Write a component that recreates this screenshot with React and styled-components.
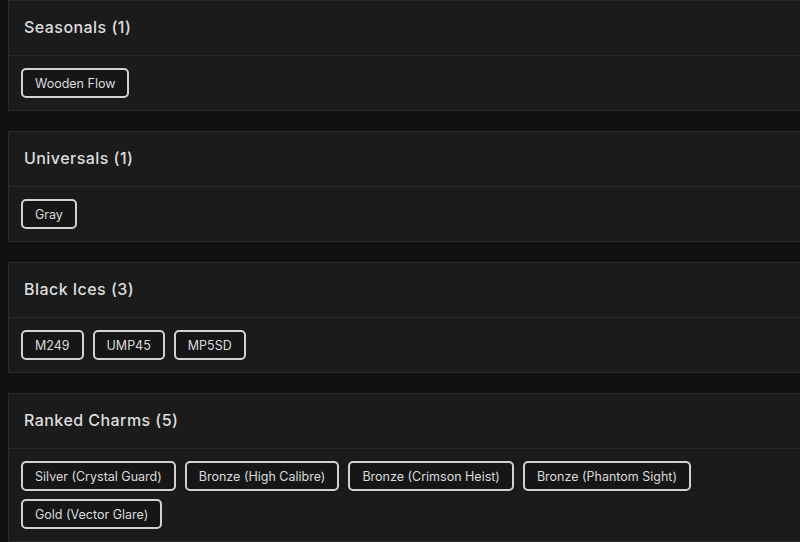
import React from "react";
import styled, { createGlobalStyle } from "styled-components";

const Global = createGlobalStyle`
  html, body { margin: 0; padding: 0; background: #111111; overflow: hidden; }
  body { font-family: "Inter", "Noto Sans", sans-serif; }
`;

const Page = styled.div`
  display: flex;
  flex-direction: column;
  gap: 20px;
  padding-left: 8px;
  width: 820px;
`;

const Card = styled.section`
  background: #1b1b1b;
  border: 1px solid #2b2b2b;
`;

const Header = styled.div`
  height: 55px;
  box-sizing: border-box;
  display: flex;
  align-items: center;
  padding: 0 15px 2px;
  border-bottom: 1px solid #2b2b2b;
`;

const Title = styled.h2`
  margin: 0;
  font-size: 16px;
  font-weight: 500;
  color: #dedede;
  letter-spacing: 0.45px;
`;

const Body = styled.div`
  display: flex;
  flex-wrap: wrap;
  gap: 8px 9px;
  padding: 12px;
  width: 700px;
`;

const Tag = styled.button`
  height: 30px;
  padding: 2px 12px 0;
  border: 2px solid #d2d2d2;
  border-radius: 5px;
  background: #161616;
  color: #dcdcdc;
  font-family: inherit;
  font-size: 12.5px;
  font-weight: 400;
  line-height: 1;
`;

const sections = [
  { title: "Seasonals", items: ["Wooden Flow"] },
  { title: "Universals", items: ["Gray"] },
  { title: "Black Ices", items: ["M249", "UMP45", "MP5SD"] },
  {
    title: "Ranked Charms",
    items: [
      "Silver (Crystal Guard)",
      "Bronze (High Calibre)",
      "Bronze (Crimson Heist)",
      "Bronze (Phantom Sight)",
      "Gold (Vector Glare)",
    ],
  },
];

export default function App() {
  return (
    <>
      <Global />
      <Page>
        {sections.map((s) => (
          <Card key={s.title}>
            <Header>
              <Title>
                {s.title} ({s.items.length})
              </Title>
            </Header>
            <Body>
              {s.items.map((it) => (
                <Tag key={it}>{it}</Tag>
              ))}
            </Body>
          </Card>
        ))}
      </Page>
    </>
  );
}
